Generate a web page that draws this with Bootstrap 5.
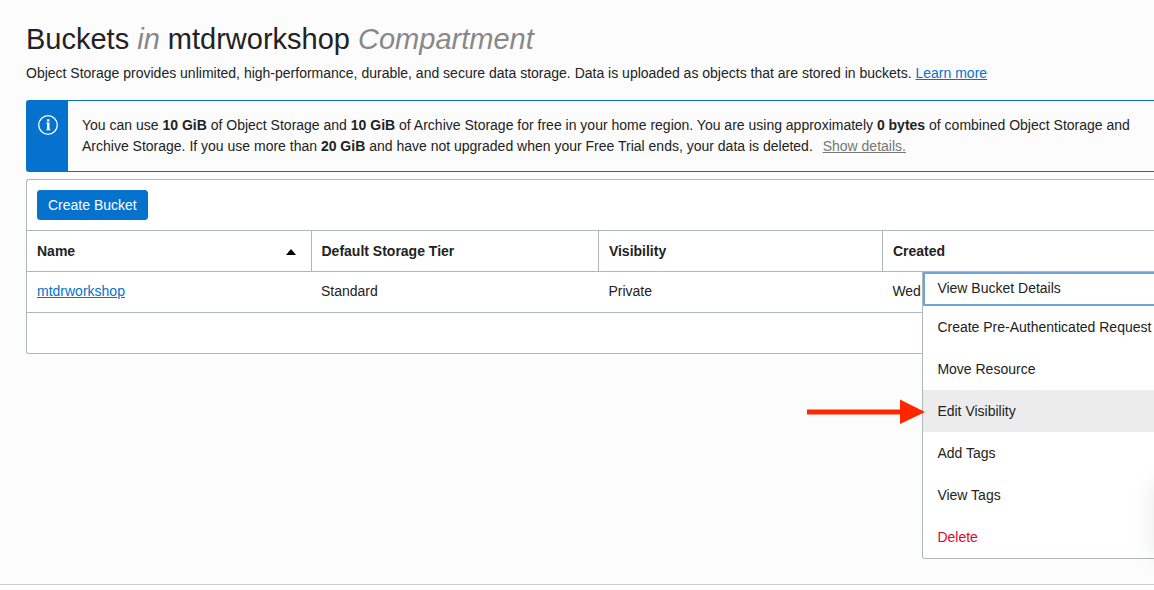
<!DOCTYPE html>
<html lang="en">
<head>
<meta charset="utf-8">
<meta name="viewport" content="width=device-width, initial-scale=1">
<title>Buckets</title>
<link href="https://cdn.jsdelivr.net/npm/bootstrap@5.3.0/dist/css/bootstrap.min.css" rel="stylesheet">
<style>
  body { font-family: "Liberation Sans", Arial, sans-serif; font-size: 14px; line-height: 21px; color: #222; background: #fcfcfc; overflow-x: hidden; }
  a { color: #0572ce; }
  h1 { font-size: 29px; line-height: 34px; font-weight: 400; }
  h1 em { color: #888; }
  main { padding: 22px 0 0 26px; }
  .intro { margin: 7px 0 16px; }
  .notice { border: 1px solid #0572ce; border-right: 0; border-radius: 3px 0 0 3px; margin-bottom: 7px; }
  .notice-icon { width: 41px; background: #0572ce; padding: 13px 0 0 10px; }
  .notice-icon svg { display: block; }
  .notice-text { padding: 14px 12px 14px 14px; }
  .notice-text a { color: #767676; margin-left: 6px; }
  .panel { background: #fff; border: 1px solid #b0b5bf; border-right: 0; border-radius: 3px 0 0 3px; }
  .btn-create { --bs-btn-color: #fff; --bs-btn-bg: #0572ce; --bs-btn-hover-color: #fff; --bs-btn-hover-bg: #0461b0; --bs-btn-border-color: #0572ce; font-size: 14px; line-height: 20px; padding: 4px 10px; border-radius: 3px; margin: 10px; }
  .bucket-table { table-layout: fixed; color: #222; margin: 0; border-color: #b0b5bf; --bs-table-bg: #fff; --bs-table-color: #222; }
  .bucket-table th, .bucket-table td { padding: 9px 10px 10px; height: 41px; border: 0 solid #b0b5bf; border-top-width: 1px; }
  .bucket-table th { border-left-width: 1px; padding: 10px 10px 9px; }
  .bucket-table th:first-child { border-left-width: 0; }
  .bucket-table .blank-row td { height: 40px; border-radius: 0 0 0 3px; }
  .c-name { width: 25.2%; }
  .c-tier { width: 25.5%; }
  .c-vis { width: 25.2%; }
  .row-menu { left: 40px; top: 0; width: 260px; z-index: 5; background: #fff; border: 1px solid #b0b5bf; border-top: 0; border-radius: 0 0 3px 3px; }
  .row-menu button { display: block; width: 100%; padding: 0 14px; height: 42px; line-height: 42px; border: 0; background: #fff; color: #222; text-align: left; white-space: nowrap; }
  .row-menu .focused { height: 34px; line-height: 32px; padding-bottom: 2px; box-shadow: inset 0 0 0 2px #70a3dc; }
  .row-menu .current { background: #ececec; }
  .row-menu .danger { color: #e2062c; border-radius: 0 0 3px 3px; }
  .pointer { right: 100%; top: 9px; margin-right: -2px; }
  .help-tab { left: 100%; bottom: 35px; width: 40px; height: 70px; box-shadow: 0 0 24px rgba(0,0,0,.1); z-index: 6; }
  footer { border-top: 1px solid #ccc; height: 6px; background: #fff; }
</style>
</head>
<body class="d-flex flex-column min-vh-100 position-relative">
<main class="flex-grow-1">
  <h1 class="mb-0">Buckets <em>in</em> mtdrworkshop <em>Compartment</em></h1>
  <p class="intro">Object Storage provides unlimited, high-performance, durable, and secure data storage. Data is uploaded as objects that are stored in buckets. <a href="#">Learn more</a></p>

  <div class="notice d-flex" role="note">
    <div class="notice-icon flex-shrink-0">
      <svg width="22" height="22" viewBox="0 0 22 22" fill="none" aria-hidden="true">
        <circle cx="11" cy="11" r="9.3" stroke="#fff" stroke-width="1.3"/>
        <path d="M9.200 8.500h3.300v6.700h.9v1h-4.200v-1h.8V9.500h-.8z M10 5.200h2.500v2.200H10z" fill="#fff"/>
      </svg>
    </div>
    <div class="notice-text">You can use <b>10 GiB</b> of Object Storage and <b>10 GiB</b> of Archive Storage for free in your home region. You are using approximately <b>0 bytes</b> of combined Object Storage and Archive Storage. If you use more than <b>20 GiB</b> and have not upgraded when your Free Trial ends, your data is deleted. <a href="#">Show details.</a></div>
  </div>

  <section class="panel">
    <div class="d-flex"><button type="button" class="btn btn-create">Create Bucket</button></div>
    <table class="table bucket-table">
      <thead>
        <tr>
          <th class="c-name" scope="col" aria-sort="ascending">
            <div class="d-flex align-items-center justify-content-between">Name
              <svg class="me-1" width="12" height="6" viewBox="0 0 12 6" aria-hidden="true"><path d="M1 6 6 0l5 6z" fill="#000"/></svg>
            </div>
          </th>
          <th class="c-tier" scope="col">Default Storage Tier</th>
          <th class="c-vis" scope="col">Visibility</th>
          <th scope="col">Created</th>
        </tr>
      </thead>
      <tbody>
        <tr>
          <td><a href="#">mtdrworkshop</a></td>
          <td>Standard</td>
          <td>Private</td>
          <td class="position-relative">Wed
            <div class="row-menu position-absolute">
              <button type="button" class="focused">View Bucket Details</button>
              <button type="button">Create Pre-Authenticated Request</button>
              <button type="button">Move Resource</button>
              <button type="button" class="current position-relative">Edit Visibility
                <svg class="pointer position-absolute" width="118" height="26" viewBox="0 0 118 26" aria-hidden="true"><path d="M0 10.500h93V.5L118 13 93 25V15.500H0z" fill="#ff2600"/></svg>
              </button>
              <button type="button">Add Tags</button>
              <button type="button">View Tags</button>
              <button type="button" class="danger">Delete</button>
            </div>
          </td>
        </tr>
        <tr class="blank-row"><td class="p-0" colspan="4"></td></tr>
      </tbody>
    </table>
  </section>
</main>
<div class="help-tab position-absolute"></div>
<footer></footer>
<script src="https://cdn.jsdelivr.net/npm/bootstrap@5.3.0/dist/js/bootstrap.bundle.min.js"></script>
</body>
</html>
